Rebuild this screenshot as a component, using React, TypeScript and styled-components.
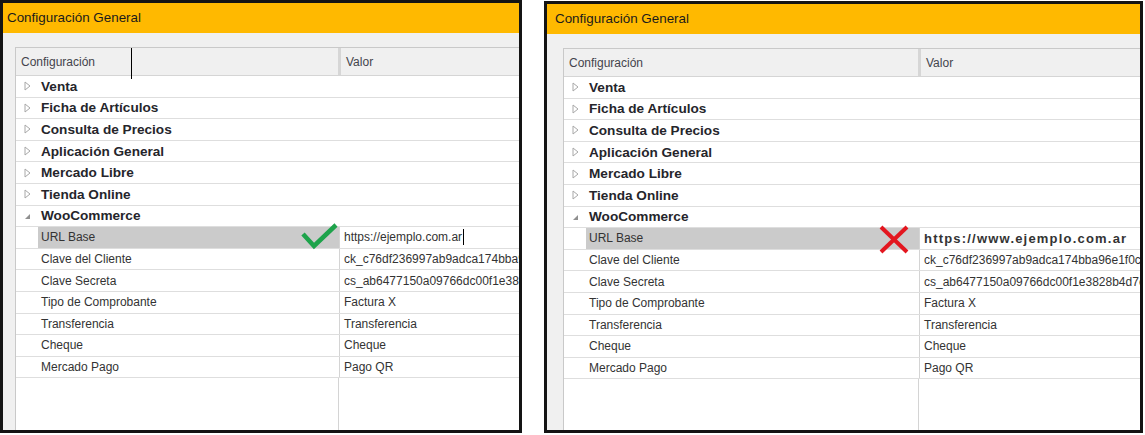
import styled, { createGlobalStyle } from "styled-components";

const GlobalStyle = createGlobalStyle`
  body {
    margin: 0;
    background: #ffffff;
    font-family: "Liberation Sans", Arial, sans-serif;
  }
`;

const categories = [
  "Venta",
  "Ficha de Artículos",
  "Consulta de Precios",
  "Aplicación General",
  "Mercado Libre",
  "Tienda Online",
];

const wooRows = [
  ["Clave del Cliente", "ck_c76df236997ab9adca174bba96e1f0c3a7"],
  ["Clave Secreta", "cs_ab6477150a09766dc00f1e3828b4d7e19c"],
  ["Tipo de Comprobante", "Factura X"],
  ["Transferencia", "Transferencia"],
  ["Cheque", "Cheque"],
  ["Mercado Pago", "Pago QR"],
];

const CollapsedArrow = () => (
  <svg width="7" height="10" viewBox="0 0 7 10">
    <polygon points="1,1 6,5 1,9" fill="none" stroke="#a8a8a8" strokeWidth="1" />
  </svg>
);

const ExpandedArrow = () => (
  <svg width="7" height="10" viewBox="0 0 7 10">
    <polygon points="6,3 6,8 1,8" fill="#909090" />
  </svg>
);

const CheckMark = () => (
  <Mark width="37" height="28" viewBox="0 0 37 28" $right={1} $top={-4}>
    <polyline points="2,11 13,23 35,2" fill="none" stroke="#1ea34b" strokeWidth="4.5" />
  </Mark>
);

const CrossMark = () => (
  <Mark width="30" height="29" viewBox="0 0 30 29" $right={10} $top={-3}>
    <line x1="2" y1="2" x2="28" y2="27" stroke="#e3161f" strokeWidth="4" />
    <line x1="28" y1="2" x2="2" y2="27" stroke="#e3161f" strokeWidth="4" />
  </Mark>
);

type PanelProps = {
  width: number;
  height: number;
  top: number;
  inset: number;
  labelWidth: number;
  headerCursor?: boolean;
  variant: "ok" | "bad";
};

const ConfigPanel = ({ width, height, top, inset, labelWidth, headerCursor, variant }: PanelProps) => (
  <Panel $width={width} $height={height} $top={top}>
    <TitleBar $inset={inset + 4}>Configuración General</TitleBar>
    <Body $inset={inset + 12}>
      <Grid>
        {headerCursor && <HeaderCursor />}
        <Header $labelWidth={labelWidth}>
          <HeaderCell $divider>Configuración</HeaderCell>
          <HeaderCell>Valor</HeaderCell>
        </Header>
        {categories.map((c) => (
          <CategoryRow key={c}>
            <Gutter>
              <CollapsedArrow />
            </Gutter>
            <CategoryTitle>{c}</CategoryTitle>
          </CategoryRow>
        ))}
        <CategoryRow>
          <Gutter>
            <ExpandedArrow />
          </Gutter>
          <CategoryTitle>WooCommerce</CategoryTitle>
        </CategoryRow>
        <PropertyRow $labelWidth={labelWidth}>
          <span />
          <LabelCell $selected>
            URL Base
            {variant === "ok" ? <CheckMark /> : <CrossMark />}
          </LabelCell>
          {variant === "ok" ? (
            <ValueCell>
              https://ejemplo.com.ar
              <Caret />
            </ValueCell>
          ) : (
            <ValueCell $bold>https://www.ejemplo.com.ar</ValueCell>
          )}
        </PropertyRow>
        {wooRows.map(([label, value]) => (
          <PropertyRow key={label} $labelWidth={labelWidth}>
            <span />
            <LabelCell>{label}</LabelCell>
            <ValueCell>{value}</ValueCell>
          </PropertyRow>
        ))}
        <Filler $labelWidth={labelWidth}>
          <FillerLabel />
          <span />
        </Filler>
      </Grid>
    </Body>
  </Panel>
);

const App = () => (
  <>
    <GlobalStyle />
    <Page>
      <ConfigPanel width={522} height={433} top={0} inset={0} labelWidth={323} headerCursor variant="ok" />
      <ConfigPanel width={599} height={432} top={1} inset={4} labelWidth={355} variant="bad" />
    </Page>
  </>
);

export default App;

const Page = styled.div`
  display: flex;
  align-items: flex-start;
  gap: 22px;
  width: 1145px;
  height: 435px;
  overflow: hidden;
`;

const Panel = styled.div<{ $width: number; $height: number; $top: number }>`
  box-sizing: border-box;
  width: ${(p) => p.$width}px;
  height: ${(p) => p.$height}px;
  margin-top: ${(p) => p.$top}px;
  border: 3px solid #141414;
  background: #f0f0f0;
  display: flex;
  flex-direction: column;
  overflow: hidden;
  flex: none;
`;

const TitleBar = styled.div<{ $inset: number }>`
  flex: none;
  height: 30px;
  line-height: 30px;
  padding-left: ${(p) => p.$inset}px;
  background: #ffb900;
  font-size: 13.4px;
  color: #1b1b1b;
`;

const Body = styled.div<{ $inset: number }>`
  flex: 1;
  min-height: 0;
  display: flex;
  padding: 14px 0 0 ${(p) => p.$inset}px;
`;

const Grid = styled.div`
  position: relative;
  flex: none;
  width: 720px;
  display: flex;
  flex-direction: column;
  background: #ffffff;
  border-top: 1px solid #c9c9c9;
  border-left: 1px solid #c9c9c9;
`;

const HeaderCursor = styled.div`
  position: absolute;
  left: 115px;
  top: 0;
  width: 1px;
  height: 31px;
  background: #000000;
`;

const Header = styled.div<{ $labelWidth: number }>`
  display: grid;
  grid-template-columns: ${(p) => p.$labelWidth + 2}px 1fr;
  height: 28px;
  box-sizing: border-box;
  background: #f0f0f0;
  border-bottom: 1px solid #d5d5d5;
  font-size: 12px;
  color: #44444c;
`;

const HeaderCell = styled.div<{ $divider?: boolean }>`
  display: flex;
  align-items: center;
  padding-left: 5px;
  border-right: ${(p) => (p.$divider ? "3px solid #d6d6d6" : "none")};
`;

const CategoryRow = styled.div`
  display: flex;
  align-items: center;
  height: 21.6px;
  box-sizing: border-box;
  border-bottom: 1px solid #dedede;
  font-size: 13.6px;
  font-weight: bold;
  color: #25252b;
`;

const Gutter = styled.span`
  flex: none;
  width: 22px;
  box-sizing: border-box;
  padding-left: 8px;
  display: flex;
  align-items: center;
`;

const CategoryTitle = styled.span`
  padding-left: 3px;
  white-space: nowrap;
`;

const PropertyRow = styled.div<{ $labelWidth: number }>`
  display: grid;
  grid-template-columns: 22px ${(p) => p.$labelWidth - 22}px 1fr;
  height: 21.6px;
  box-sizing: border-box;
  border-bottom: 1px solid #dedede;
  font-size: 12px;
  color: #333333;
`;

const LabelCell = styled.div<{ $selected?: boolean }>`
  position: relative;
  display: flex;
  align-items: center;
  padding-left: 3px;
  white-space: nowrap;
  background: ${(p) => (p.$selected ? "#cbcbcb" : "transparent")};
`;

const ValueCell = styled.div<{ $bold?: boolean }>`
  display: flex;
  align-items: center;
  padding-left: 4px;
  border-left: 1px solid #d4d4d4;
  white-space: nowrap;
  overflow: hidden;
  font-size: ${(p) => (p.$bold ? 13 : 12)}px;
  font-weight: ${(p) => (p.$bold ? "bold" : "normal")};
  letter-spacing: ${(p) => (p.$bold ? "1.2px" : "0")};
`;

const Caret = styled.span`
  display: inline-block;
  width: 1px;
  height: 16px;
  margin-left: 1px;
  background: #000000;
`;

const Mark = styled.svg<{ $right: number; $top: number }>`
  position: absolute;
  right: ${(p) => p.$right}px;
  top: ${(p) => p.$top}px;
`;

const Filler = styled.div<{ $labelWidth: number }>`
  flex: 1;
  display: grid;
  grid-template-columns: ${(p) => p.$labelWidth}px 1fr;
`;

const FillerLabel = styled.div`
  border-right: 1px solid #d4d4d4;
`;
